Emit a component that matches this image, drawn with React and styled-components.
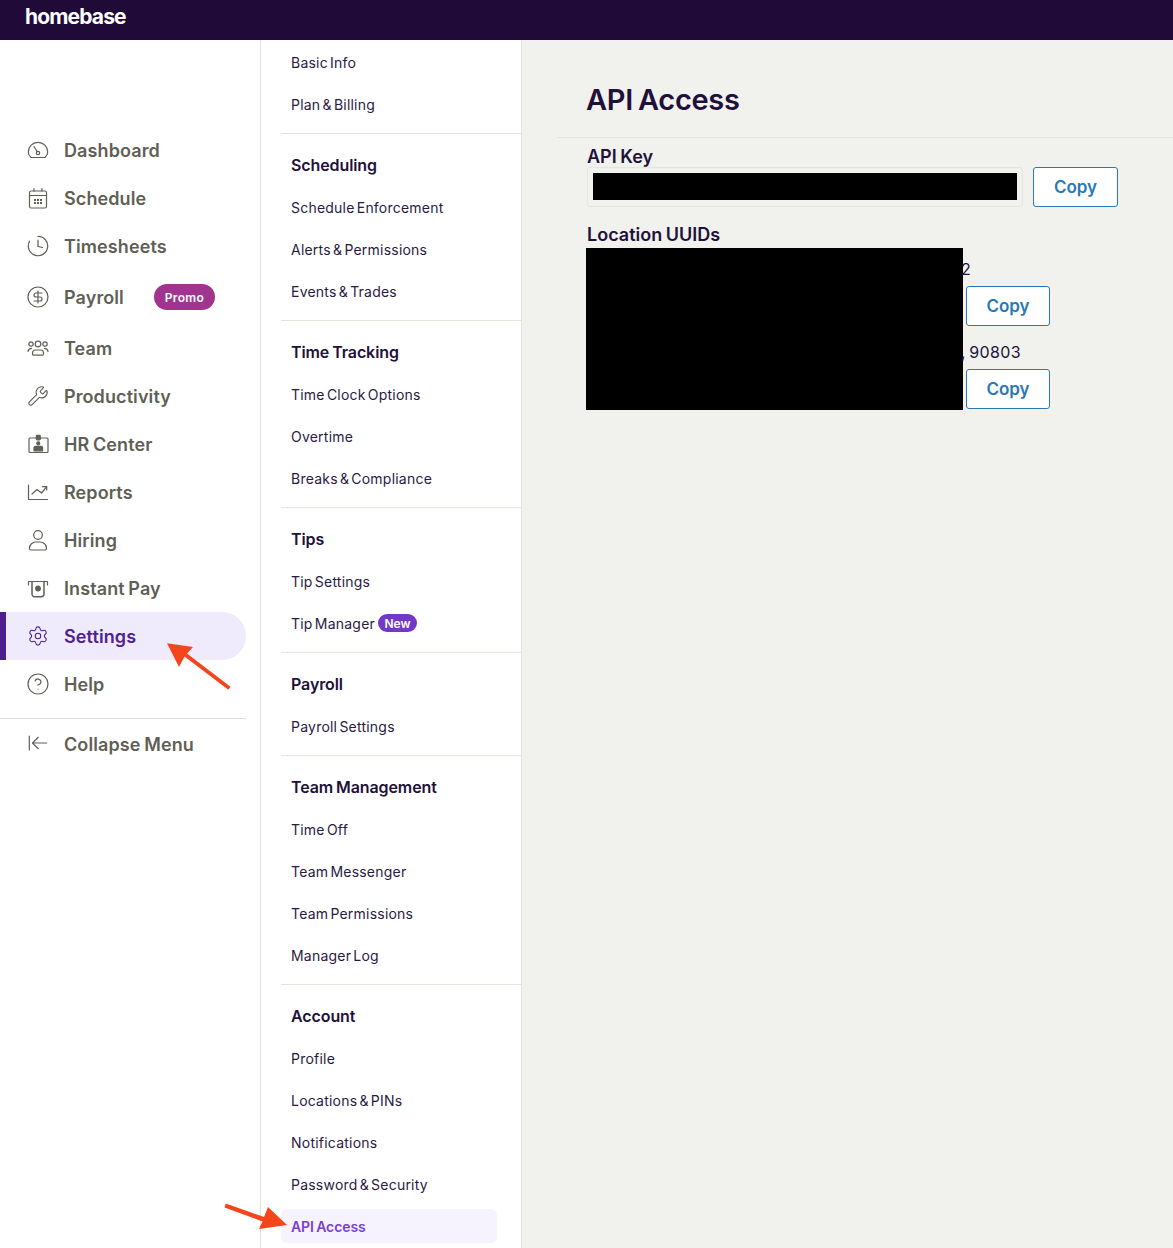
import styled, { createGlobalStyle } from "styled-components";
import { CircleDollarSign, CircleHelp, Settings, Wrench } from "lucide-react";

const GlobalStyle = createGlobalStyle`
  html, body {
    margin: 0;
    padding: 0;
    height: 100%;
    background: #fff;
    font-family: Inter, "Noto Sans", sans-serif;
    color: #22103a;
  }
  * { box-sizing: border-box; }
`;

const Page = styled.div`
  position: relative;
  width: 1173px;
  height: 1248px;
  overflow: hidden;
`;

const TopBar = styled.header`
  height: 40px;
  background: #1f0a38;
  padding: 0 0 8px 25px;
  display: flex;
  align-items: center;
`;

const Logo = styled.span`
  color: #fff;
  font-size: 21px;
  font-weight: 700;
  letter-spacing: -0.85px;
`;

const Columns = styled.div`
  display: grid;
  grid-template-columns: 261px 261px 1fr;
  height: 1208px;
`;

const MainNav = styled.nav`
  border-right: 1px solid #e4e4d9;
  padding-top: 86px;
`;

const NavItem = styled.div`
  display: flex;
  align-items: center;
  width: 246px;
  height: ${(p) => (p.$tall ? "54px" : "48px")};
  padding-left: 26px;
  gap: 14px;
  color: ${(p) => (p.$active ? "#4e2390" : "#5f5f56")};
  background: ${(p) => (p.$active ? "#efeafc" : "transparent")};
  box-shadow: ${(p) => (p.$active ? "inset 6px 0 0 #4d1f8c" : "none")};
  border-radius: ${(p) => (p.$active ? "0 24px 24px 0" : "0")};
  font-size: 18px;
  font-weight: 600;
  letter-spacing: 0.1px;
  word-spacing: -1px;
`;

const IconSlot = styled.span`
  display: flex;
  align-items: center;
  justify-content: center;
  width: 24px;
  height: 24px;
`;

const Promo = styled.span`
  margin-left: 16px;
  width: 61px;
  height: 26px;
  display: flex;
  align-items: center;
  justify-content: center;
  border-radius: 13px;
  background: #a1348f;
  color: #fff;
  font-size: 12px;
  font-weight: 600;
  letter-spacing: 0.3px;
`;

const NavDivider = styled.hr`
  width: 246px;
  margin: 10px 0 1px;
  border: 0;
  border-top: 1px solid #e0e0da;
`;

const SubNav = styled.aside`
  background: #fff;
  padding-top: 1px;
`;

const Section = styled.section`
  padding-bottom: ${(p) => (p.$last ? "0" : "8px")};
  padding-top: ${(p) => (p.$first ? "0" : "10px")};
  margin-left: 20px;
  border-bottom: ${(p) => (p.$last ? "none" : "1px solid #e4e4d9")};
`;

const SectionTitle = styled.h3`
  margin: 0;
  height: 42px;
  padding-left: 10px;
  display: flex;
  align-items: center;
  font-size: 16px;
  font-weight: 600;
  letter-spacing: -0.1px;
  word-spacing: -1px;
  color: #22103a;
`;

const SubRow = styled.div`
  height: 42px;
  padding-left: 10px;
  display: flex;
  align-items: center;
  gap: 3px;
  font-size: 14px;
  font-weight: 400;
  letter-spacing: 0.22px;
  word-spacing: -2px;
  color: #2a1a42;
`;

const ActivePill = styled.span`
  display: flex;
  align-items: center;
  width: 216px;
  height: 34px;
  margin-left: -10px;
  padding-left: 10px;
  border-radius: 6px;
  background: #f6f2fe;
  color: #7a3ed0;
  font-weight: 600;
  letter-spacing: -0.1px;
  word-spacing: -1px;
`;

const NewBadge = styled.span`
  display: flex;
  align-items: center;
  justify-content: center;
  width: 39px;
  height: 18px;
  border-radius: 9px;
  background: #7438c8;
  color: #fff;
  font-size: 12px;
  font-weight: 600;
  letter-spacing: 0;
`;

const Main = styled.main`
  background: #f1f2ed;
  border-left: 1px solid #e4e4d9;
  margin-left: -1px;
  padding-left: 35px;
`;

const TitleBar = styled.div`
  height: 98px;
  padding: 37px 0 0 30px;
  border-bottom: 1px solid #e4e5df;
`;

const Title = styled.h1`
  margin: 0 0 0 -1px;
  font-size: 29px;
  line-height: 46px;
  font-weight: 600;
  letter-spacing: -0.3px;
  word-spacing: -2px;
  color: #22103a;
`;

const Body = styled.div`
  padding: 7px 0 0 30px;
`;

const FieldLabel = styled.div`
  height: 22px;
  line-height: 24px;
  font-size: 18px;
  font-weight: 600;
  letter-spacing: 0;
  word-spacing: -1px;
  color: #22103a;
`;

const KeyRow = styled.div`
  display: flex;
  gap: 10px;
  margin-bottom: 16px;
`;

const KeyBox = styled.div`
  width: 436px;
  height: 40px;
  padding: 5px;
  border: 1px solid #e4e5df;
  border-radius: 3px;
`;

const Redacted = styled.div`
  background: #000;
  height: ${(p) => p.$height || "auto"};
  width: ${(p) => p.$width || "auto"};
  margin-left: ${(p) => p.$offset || "0"};
`;

const LocationGrid = styled.div`
  display: flex;
  margin-top: 3px;
`;

const LocationList = styled.div`
  margin-left: -1px;
  width: 100px;
`;

const LocationText = styled.div`
  height: 38px;
  padding-top: 9px;
  margin-left: ${(p) => p.$offset};
  line-height: 24px;
  font-size: 16px;
  letter-spacing: 0.35px;
  word-spacing: -1.5px;
  color: #22103a;
  white-space: nowrap;
`;

const CopyButton = styled.button`
  display: block;
  width: ${(p) => p.$width};
  height: 40px;
  margin-left: ${(p) => p.$offset || "0"};
  margin-bottom: ${(p) => p.$bottom || "0"};
  border: 1px solid #2a78b5;
  border-radius: 3px;
  background: #fff;
  color: #2a78b5;
  font-family: inherit;
  font-size: 17px;
  font-weight: 600;
  letter-spacing: -0.1px;
`;

const ArrowSvg = styled.svg`
  position: absolute;
  left: ${(p) => p.$left}px;
  top: ${(p) => p.$top}px;
  pointer-events: none;
`;

const strokeProps = {
  fill: "none",
  stroke: "currentColor",
  strokeWidth: 1.2,
  strokeLinecap: "round",
  strokeLinejoin: "round",
};

function Glyph({ children }) {
  return (
    <svg width="24" height="24" viewBox="0 0 24 24" {...strokeProps}>
      {children}
    </svg>
  );
}

const DashboardIcon = () => (
  <Glyph>
    <path d="M5 19.5C3.3 18 2.3 16.2 2.3 14a9.7 9.7 0 0 1 19.4 0c0 2.200-1 4-2.700 5.500z" />
    <path d="M8 8.500l3.200 5" />
    <circle cx="12" cy="15" r="1.700" />
  </Glyph>
);

const calendarDots = [8, 11, 14].flatMap((x) => [
  { x, y: 13 },
  { x, y: 16 },
]);

const ScheduleIcon = () => (
  <Glyph>
    <rect x="3.500" y="5" width="17" height="17" rx="1.500" />
    <path d="M3.500 9.500h17M8 2.500V5M16 2.500V5" />
    {calendarDots.map(({ x, y }) => (
      <rect key={`${x}-${y}`} x={x} y={y} width="2" height="2" fill="currentColor" stroke="none" />
    ))}
  </Glyph>
);

const ClockIcon = () => (
  <Glyph>
    <path d="M12 2.300a9.700 9.700 0 1 1-8.400 4.900" />
    <path d="M12 6v6.500l4.500 1" />
  </Glyph>
);

const TeamIcon = () => (
  <Glyph>
    <circle cx="12" cy="8" r="2.800" />
    <circle cx="5" cy="8" r="2.200" />
    <circle cx="19" cy="8" r="2.200" />
    <path d="M6.500 18v-1a3 3 0 0 1 3-3h5a3 3 0 0 1 3 3v1a1.200 1.200 0 0 1-1.200 1.200H7.700A1.200 1.200 0 0 1 6.500 18z" />
    <path d="M2 15.500c.3-2 1.500-3.200 3.500-3.200M22 15.500c-.3-2-1.500-3.200-3.500-3.200" />
  </Glyph>
);

const BadgeIcon = () => (
  <Glyph>
    <path d="M10 6H4a1 1 0 0 0-1 1v12.500a1 1 0 0 0 1 1h17a1 1 0 0 0 1-1V7a1 1 0 0 0-1-1h-6.500" />
    <rect x="10.300" y="3.300" width="4" height="4.500" rx=".800" fill="currentColor" />
    <circle cx="12.300" cy="11.300" r="1.500" fill="currentColor" />
    <path d="M8 18.800v-3a1.500 1.500 0 0 1 1.500-1.500h5.600a1.500 1.500 0 0 1 1.500 1.500v3z" fill="currentColor" />
  </Glyph>
);

const ReportsIcon = () => (
  <Glyph>
    <path d="M2.500 5v14.500h19" />
    <path d="M6 14l5-4.500 4.600 3.500 5.100-6.300" />
    <path d="M16.500 6.700h4.200V10" />
  </Glyph>
);

const HiringIcon = () => (
  <Glyph>
    <circle cx="12" cy="7" r="4.300" />
    <path d="M3.500 20.500c0-4 3-6.500 6.500-6.500h4c3.500 0 6.500 2.500 6.500 6.500 0 1-.6 1.500-1.500 1.500H5c-.9 0-1.500-.5-1.500-1.500z" />
  </Glyph>
);

const InstantPayIcon = () => (
  <Glyph>
    <path d="M2.500 9V5.500h19V9" />
    <path d="M6 5.500V18a2.700 2.700 0 0 0 2.700 2.700h6.600A2.700 2.700 0 0 0 18 18V5.500" strokeWidth="1.500" />
    <circle cx="12" cy="12.500" r="2.300" fill="currentColor" />
  </Glyph>
);

const CollapseIcon = () => (
  <Glyph>
    <path d="M3.300 4v14" />
    <path d="M20.700 11H6.500M12.300 5.300L6.500 11l5.800 5.700" />
  </Glyph>
);

const lucide = (Icon, size) => () => <Icon size={size} strokeWidth={1.2} />;

const navItems = [
  { label: "Dashboard", Icon: DashboardIcon },
  { label: "Schedule", Icon: ScheduleIcon },
  { label: "Timesheets", Icon: ClockIcon },
  { label: "Payroll", Icon: lucide(CircleDollarSign, 24), promo: true },
  { label: "Team", Icon: TeamIcon },
  { label: "Productivity", Icon: lucide(Wrench, 22) },
  { label: "HR Center", Icon: BadgeIcon },
  { label: "Reports", Icon: ReportsIcon },
  { label: "Hiring", Icon: HiringIcon },
  { label: "Instant Pay", Icon: InstantPayIcon },
  { label: "Settings", Icon: lucide(Settings, 22), active: true },
  { label: "Help", Icon: lucide(CircleHelp, 24) },
];

const sections = [
  { rows: ["Basic Info", "Plan & Billing"] },
  {
    title: "Scheduling",
    rows: ["Schedule Enforcement", "Alerts & Permissions", "Events & Trades"],
  },
  {
    title: "Time Tracking",
    rows: ["Time Clock Options", "Overtime", "Breaks & Compliance"],
  },
  { title: "Tips", rows: ["Tip Settings", "Tip Manager"] },
  { title: "Payroll", rows: ["Payroll Settings"] },
  {
    title: "Team Management",
    rows: ["Time Off", "Team Messenger", "Team Permissions", "Manager Log"],
  },
  {
    title: "Account",
    rows: [
      "Profile",
      "Locations & PINs",
      "Notifications",
      "Password & Security",
      "API Access",
    ],
  },
];

function SubRowContent({ label }) {
  if (label === "API Access") return <ActivePill>{label}</ActivePill>;
  return (
    <>
      {label}
      {label === "Tip Manager" && <NewBadge>New</NewBadge>}
    </>
  );
}

export default function App() {
  return (
    <Page>
      <GlobalStyle />
      <TopBar>
        <Logo>homebase</Logo>
      </TopBar>
      <Columns>
        <MainNav>
          {navItems.map(({ label, Icon, active, promo }) => (
            <NavItem key={label} $active={active} $tall={promo}>
              <IconSlot>
                <Icon />
              </IconSlot>
              {label}
              {promo && <Promo>Promo</Promo>}
            </NavItem>
          ))}
          <NavDivider />
          <NavItem>
            <IconSlot>
              <CollapseIcon />
            </IconSlot>
            Collapse Menu
          </NavItem>
        </MainNav>

        <SubNav>
          {sections.map((section, i) => (
            <Section
              key={section.title || "general"}
              $first={i === 0}
              $last={i === sections.length - 1}
            >
              {section.title && <SectionTitle>{section.title}</SectionTitle>}
              {section.rows.map((row) => (
                <SubRow key={row}>
                  <SubRowContent label={row} />
                </SubRow>
              ))}
            </Section>
          ))}
        </SubNav>

        <Main>
          <TitleBar>
            <Title>API Access</Title>
          </TitleBar>
          <Body>
            <FieldLabel>API Key</FieldLabel>
            <KeyRow>
              <KeyBox>
                <Redacted $height="27px" />
              </KeyBox>
              <CopyButton $width="85px">Copy</CopyButton>
            </KeyRow>
            <FieldLabel>Location UUIDs</FieldLabel>
            <LocationGrid>
              <Redacted $width="377px" $height="162px" $offset="-1px" />
              <LocationList>
                <LocationText $offset="-1px">2</LocationText>
                <CopyButton $width="84px" $offset="4px" $bottom="5px">
                  Copy
                </CopyButton>
                <LocationText $offset="-1px">, 90803</LocationText>
                <CopyButton $width="84px" $offset="4px">
                  Copy
                </CopyButton>
              </LocationList>
            </LocationGrid>
          </Body>
        </Main>
      </Columns>

      <ArrowSvg $left={160} $top={636} width="76" height="60" viewBox="0 0 76 60">
        <path
          d="M7 7.300L33 11 27 17.500 70.500 50.700 68.300 53.700 24.500 20.500 19 31z"
          fill="#f4451c"
        />
      </ArrowSvg>
      <ArrowSvg $left={220} $top={1198} width="72" height="36" viewBox="0 0 72 36">
        <path
          d="M67 27L39 31 42.500 23.500 4.500 9.500 5.800 5.500 44 19 48 9z"
          fill="#f4451c"
        />
      </ArrowSvg>
    </Page>
  );
}
